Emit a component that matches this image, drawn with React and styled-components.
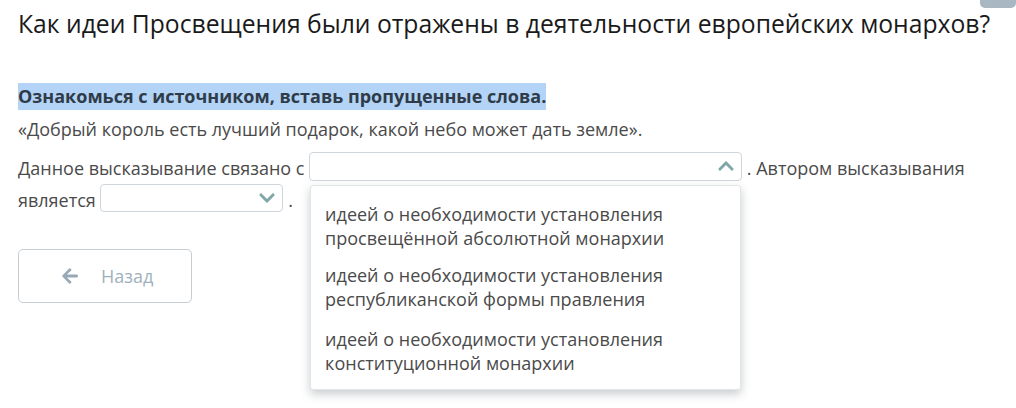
import React from "react";
import styled, { createGlobalStyle } from "styled-components";
import { FaArrowLeft, FaChevronDown, FaChevronUp } from "react-icons/fa";

const GlobalStyle = createGlobalStyle`
  body {
    margin: 0;
    background: #fff;
    font-family: "Open Sans", "Noto Sans", sans-serif;
  }
`;

const options = [
  ["идеей о необходимости установления", "просвещённой абсолютной монархии"],
  ["идеей о необходимости установления", "республиканской формы правления"],
  ["идеей о необходимости установления", "конституционной монархии"],
];

const App = () => {
  return (
    <Page>
      <GlobalStyle />
      <Corner />
      <Title>Как идеи Просвещения были отражены в деятельности европейских монархов?</Title>
      <Task>
        <Mark>Ознакомься с источником, вставь пропущенные слова.</Mark>
      </Task>
      <Quote>«Добрый король есть лучший подарок, какой небо может дать земле».</Quote>
      <Fill>
        Данное высказывание связано с{" "}
        <SelectWrap>
          <Select $width={433} $height={29}>
            <FaChevronUp />
          </Select>
          <Menu>
            {options.map((o, i) => (
              <Option key={i}>
                {o[0]}
                <br />
                {o[1]}
              </Option>
            ))}
          </Menu>
        </SelectWrap>{" "}
        . Автором высказывания является{" "}
        <SelectWrap>
          <Select $width={183} $height={28}>
            <FaChevronDown />
          </Select>
        </SelectWrap>{" "}
        .
      </Fill>
      <Back>
        <FaArrowLeft />
        <span>Назад</span>
      </Back>
    </Page>
  );
};

export default App;

const Page = styled.div`
  position: relative;
  padding: 6px 18px 0;
  width: 1016px;
  height: 408px;
  box-sizing: border-box;
  overflow: hidden;
`;

const Corner = styled.div`
  position: absolute;
  top: -6px;
  right: 0;
  width: 36px;
  height: 14px;
  border-radius: 5px;
  background: #a8b7c2;
`;

const Title = styled.h1`
  margin: 0;
  font-family: "Open Sans", "Noto Sans", sans-serif;
  font-weight: 400;
  font-size: 24.7px;
  line-height: 36px;
  color: #1a1a1a;
`;

const Task = styled.p`
  margin: 42px 0 0;
  font-size: 18px;
  line-height: 24px;
  font-weight: 700;
  color: #2f3b48;
`;

const Mark = styled.span`
  background: #b3d4f7;
  padding: 1px 0 2px;
`;

const Quote = styled.p`
  margin: 9px 0 0;
  font-size: 18px;
  line-height: 24px;
  color: #4a4a4a;
`;

const Fill = styled.div`
  margin-top: 12px;
  font-size: 18px;
  line-height: 30px;
  color: #4a4a4a;
  width: 960px;
`;

const SelectWrap = styled.span`
  position: relative;
  display: inline-block;
  vertical-align: middle;
  transform: translateY(-4px);
`;

const Select = styled.span`
  display: flex;
  align-items: center;
  justify-content: flex-end;
  box-sizing: border-box;
  width: ${(p) => p.$width}px;
  height: ${(p) => p.$height}px;
  padding-right: 6px;
  border: 1px solid #cfd6db;
  border-radius: 4px;
  background: #fff;
  color: #7fa7a9;
  svg {
    width: 18px;
    height: 18px;
  }
`;

const Menu = styled.div`
  position: absolute;
  top: 33px;
  left: 1px;
  z-index: 2;
  width: 431px;
  box-sizing: border-box;
  padding: 16px 14px 14px;
  background: #fff;
  border: 1px solid #e3e6e8;
  border-radius: 3px;
  box-shadow: 0 4px 10px rgba(60, 70, 80, 0.28);
`;

const Option = styled.div`
  font-size: 18px;
  line-height: 24px;
  color: #4a4a4a;
  & + & {
    margin-top: 13px;
  }
  &:nth-child(3) {
    margin-top: 16px;
  }
`;

const Back = styled.button`
  display: flex;
  align-items: center;
  gap: 22px;
  margin-top: 33px;
  width: 174px;
  height: 54px;
  padding: 0 0 0 42px;
  box-sizing: border-box;
  background: #fff;
  border: 1px solid #c6ced4;
  border-radius: 5px;
  font-family: "Open Sans", "Noto Sans", sans-serif;
  font-size: 18px;
  color: #9fb1bd;
  svg {
    width: 18px;
    height: 18px;
    color: #97a9b6;
  }
`;
